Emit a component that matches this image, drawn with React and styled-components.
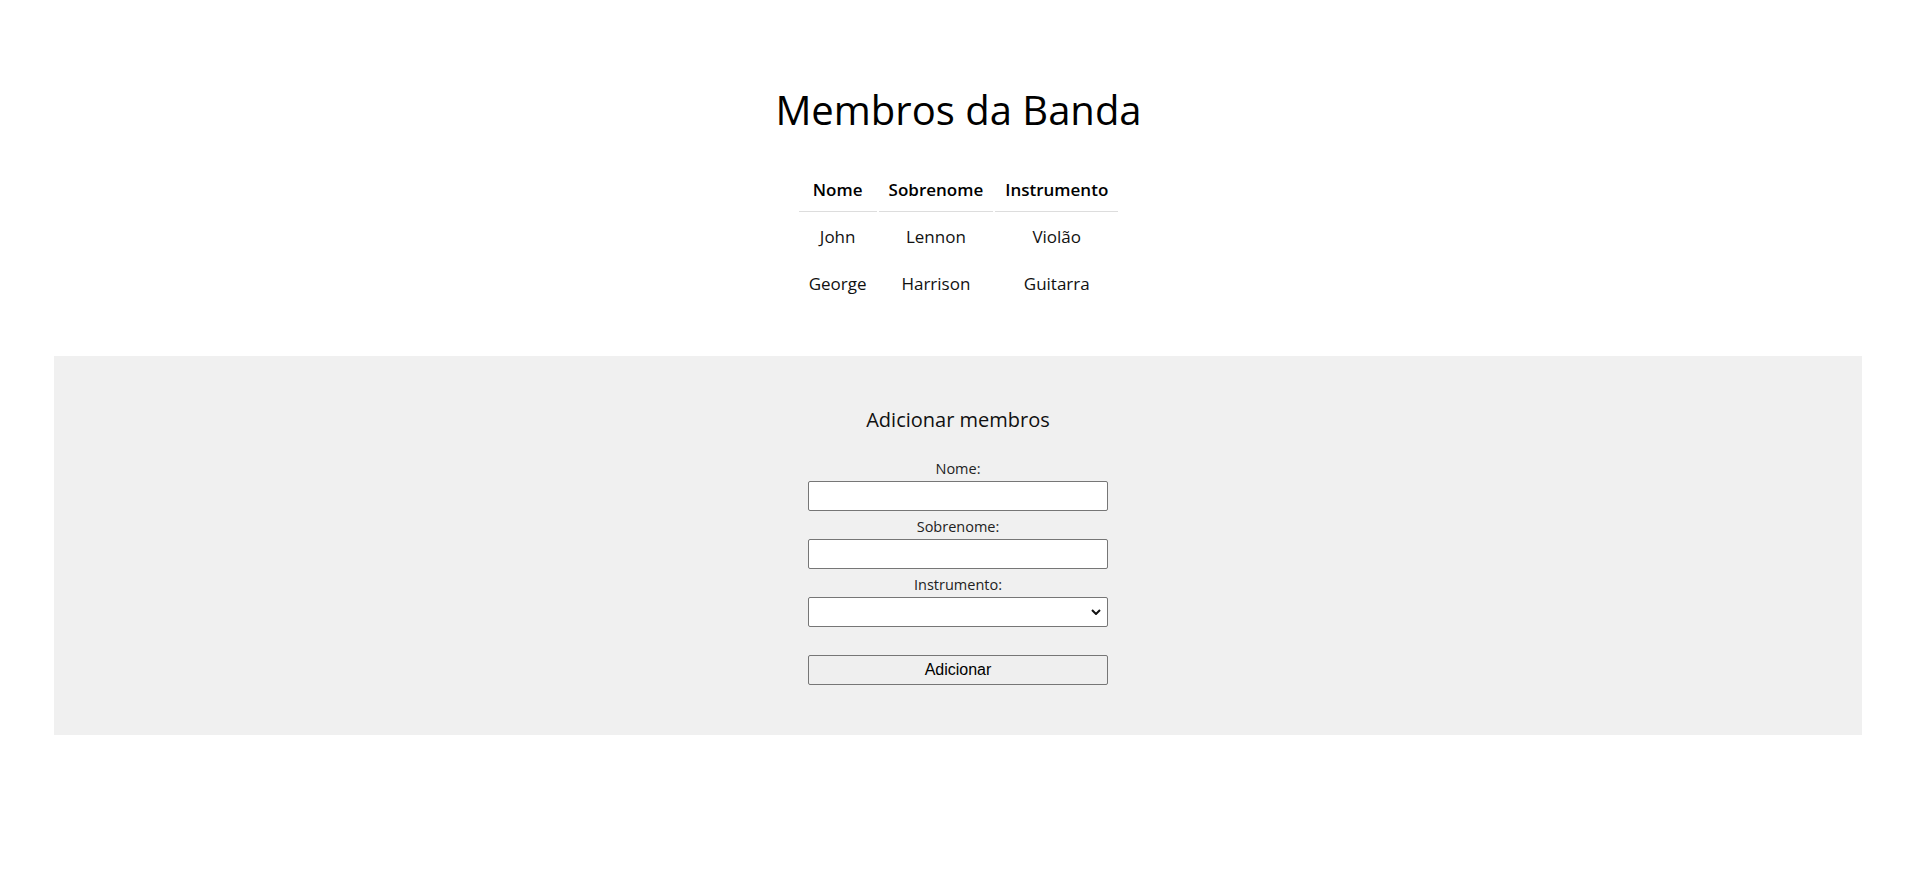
import styled, { createGlobalStyle } from "styled-components";

const GlobalStyle = createGlobalStyle`
  body {
    margin: 0;
    background: #fff;
    font-family: "Open Sans", "Noto Sans", sans-serif;
    color: #000;
  }
`;

const members = [
  { id: 1, name: "John", lastName: "Lennon", instrument: "Violão" },
  { id: 2, name: "George", lastName: "Harrison", instrument: "Guitarra" },
];

function App() {
  return (
    <>
      <GlobalStyle />
      <Page>
        <Header>
          <Title>Membros da Banda</Title>
          <Table>
            <thead>
              <tr>
                <Th>Nome</Th>
                <Th>Sobrenome</Th>
                <Th>Instrumento</Th>
              </tr>
            </thead>
            <tbody>
              {members.map((member) => (
                <tr key={member.id}>
                  <Td>{member.name}</Td>
                  <Td>{member.lastName}</Td>
                  <Td>{member.instrument}</Td>
                </tr>
              ))}
            </tbody>
          </Table>
        </Header>
        <Panel>
          <Form onSubmit={(e) => e.preventDefault()}>
            <Subtitle>Adicionar membros</Subtitle>
            <Label htmlFor="nome">Nome:</Label>
            <Input id="nome" type="text" />
            <Label htmlFor="sobrenome">Sobrenome:</Label>
            <Input id="sobrenome" type="text" />
            <Label htmlFor="instrumento">Instrumento:</Label>
            <SelectWrap>
              <Select id="instrumento" defaultValue="">
                <option value=""></option>
                <option value="violao">Violão</option>
                <option value="guitarra">Guitarra</option>
                <option value="baixo">Baixo</option>
                <option value="bateria">Bateria</option>
              </Select>
              <Chevron viewBox="0 0 10 6" aria-hidden="true">
                <path d="M1 1l4 4 4-4" />
              </Chevron>
            </SelectWrap>
            <Button type="submit">Adicionar</Button>
          </Form>
        </Panel>
      </Page>
    </>
  );
}

const Page = styled.div`
  padding-top: 83px;
`;

const Header = styled.div`
  display: flex;
  flex-direction: column;
  align-items: center;
`;

const Title = styled.h1`
  margin: 0 0 29px;
  font-size: 40px;
  font-weight: 500;
  line-height: 54px;
`;

const Table = styled.table`
  border-spacing: 2px;
  font-size: 17px;
  line-height: 23px;
`;

const Th = styled.th`
  padding: 10px 10px;
  font-weight: 600;
  border-bottom: 1px solid #ddd;
`;

const Td = styled.td`
  padding: 11px 10px;
  text-align: center;
  color: #111;
`;

const Panel = styled.section`
  margin: 48px 55px 0 54px;
  padding: 50px 0;
  background: #f0f0f0;
`;

const Form = styled.form`
  display: flex;
  flex-direction: column;
  align-items: center;
`;

const Subtitle = styled.h2`
  margin: 0 0 26px;
  font-size: 20px;
  font-weight: 400;
  line-height: 27px;
  color: #111;
`;

const Label = styled.label`
  margin-top: 6px;
  font-size: 14.5px;
  line-height: 20px;
  color: #222;

  &:first-of-type {
    margin-top: 0;
  }
`;

const fieldBox = `
  box-sizing: border-box;
  width: 300px;
  height: 30px;
  border: 1px solid #767676;
  border-radius: 2px;
  background: #fff;
`;

const Input = styled.input`
  ${fieldBox}
  margin-top: 2px;
`;

const SelectWrap = styled.div`
  position: relative;
  margin-top: 2px;
`;

const Select = styled.select`
  ${fieldBox}
  display: block;
  appearance: none;
  padding: 0 28px 0 4px;
`;

const Chevron = styled.svg`
  position: absolute;
  right: 7px;
  top: 12px;
  width: 10px;
  height: 6px;
  fill: none;
  stroke: #111;
  stroke-width: 2;
  pointer-events: none;
`;

const Button = styled.button`
  box-sizing: border-box;
  width: 300px;
  height: 30px;
  margin-top: 28px;
  border: 1px solid #767676;
  border-radius: 2px;
  background: #efefef;
  font-family: "Liberation Sans", Arial, sans-serif;
  font-size: 16px;
  color: #000;
`;

export default App;
